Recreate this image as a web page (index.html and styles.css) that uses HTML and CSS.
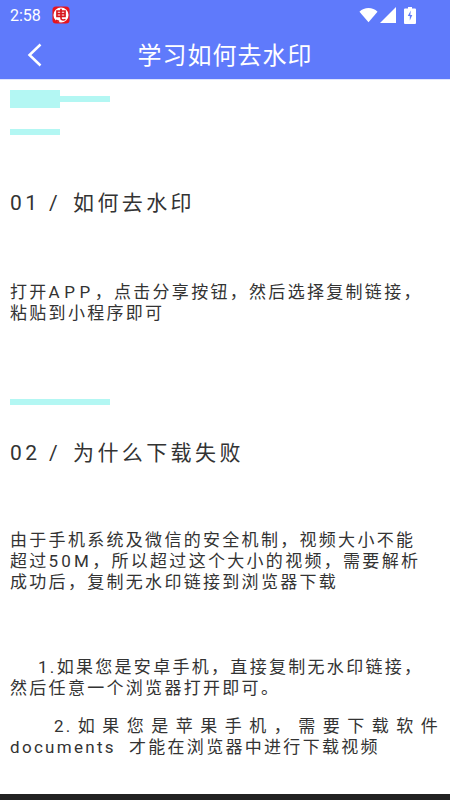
FILE: index.html
```html
<!DOCTYPE html>
<html lang="zh">
<head>
<meta charset="utf-8">
<title>学习如何去水印</title>
<link rel="stylesheet" href="styles.css">
</head>
<body>
<div class="screen">
  <header class="header">
    <div class="status">
      <span class="time">2:58</span>
      <svg class="app-icon" viewBox="0 0 20 20"><rect x="0.5" y="0.5" width="19" height="19" rx="4" fill="#e8141c"/><circle cx="10" cy="10" r="8.4" fill="#fff"/><path d="M5.500 5.500h9v6h-9zM5.500 8.500h9M10 3v10.500c0 2 2 2.500 5 1.500M4.500 15.500c1 1 2 1.500 3.500 1.500" fill="none" stroke="#d8141c" stroke-width="1.8"/></svg>
      <span class="spacer"></span>
      <svg class="wifi" viewBox="0 0 20 16"><path d="M0.500 4.500C5.500 -0.500 14.500 -0.500 19.500 4.500L10 15.500Z" fill="#fff"/></svg>
      <svg class="signal" viewBox="0 0 16 16"><path d="M16 0V16H0Z" fill="#fff"/></svg>
      <svg class="battery" viewBox="0 0 12 17"><path d="M4 0h4v1.500h3a1 1 0 0 1 1 1V16a1 1 0 0 1-1 1H1a1 1 0 0 1-1-1V2.500a1 1 0 0 1 1-1h3Z" fill="#fff"/><path d="M6.800 3.500 3.800 9h2v4.500l2.500-5.500h-2Z" fill="#5f7afb"/></svg>
    </div>
    <div class="nav">
      <svg class="back" viewBox="0 0 16 26"><path d="M13.500 2.500 2.500 13l11 10.500" fill="none" stroke="#fff" stroke-width="2.500"/></svg>
      <h1 class="title">学习如何去水印</h1>
    </div>
  </header>
  <main class="content">
    <div class="deco-top">
      <span class="deco-block"></span>
      <span class="deco-line"></span>
    </div>
    <div class="deco-short"></div>
    <h2 class="heading first"><span class="num">01 /</span>如何去水印</h2>
    <p class="text p1">打开<span class="latin">APP</span>，点击分享按钮，然后选择复制链接，<br>粘贴到小程序即可</p>
    <div class="deco-long"></div>
    <h2 class="heading second"><span class="num">02 /</span>为什么下载失败</h2>
    <p class="text p2">由于手机系统及微信的安全机制，视频大小不能<br>超过<span class="digits">50M</span>，所以超过这个大小的视频，需要解析<br>成功后，复制无水印链接到浏览器下载</p>
    <p class="text p3">1.如果您是安卓手机，直接复制无水印链接，<br>然后任意一个浏览器打开即可。</p>
    <p class="text p4">2.如果您是苹果手机，需要下载软件documents&nbsp; 才能在浏览器中进行下载视频</p>
  </main>
  <div class="navbar"></div>
</div>
</body>
</html>
```
FILE: styles.css
```css
* { box-sizing: border-box; }
html, body { margin: 0; padding: 0; }
body { font-family: Roboto, "Noto Sans CJK SC", sans-serif; background: #fff; }
.screen { width: 450px; height: 800px; display: flex; flex-direction: column; overflow: hidden; }
.header { height: 80px; background: #5f7afb; border-bottom: 1px solid #dfe4fe; color: #fff; flex: none; }
.status { height: 30px; display: flex; align-items: center; padding: 0 34px 0 10px; }
.time { font-size: 16px; font-weight: 400; width: 42px; }
.app-icon { width: 18px; height: 18px; }
.spacer { flex: 1; }
.wifi { width: 19px; height: 16px; margin-right: 2px; }
.signal { width: 16px; height: 16px; margin-right: 8px; }
.battery { width: 12px; height: 17px; }
.nav { height: 49px; position: relative; display: flex; align-items: center; justify-content: center; }
.back { position: absolute; left: 27px; top: 12px; width: 16px; height: 26px; }
.title { margin: 0 0 3px; font-size: 24px; font-weight: 400; letter-spacing: 1px; }
.content { flex: 1; padding: 10px 0 0 10px; color: #333; }
.deco-top { display: flex; align-items: center; height: 18px; }
.deco-block { width: 50px; height: 18px; background: #b3f7f3; }
.deco-line { width: 50px; height: 6px; background: #b3f7f3; }
.deco-short { width: 50px; height: 6px; background: #b3f7f3; margin-top: 21px; }
.deco-long { width: 100px; height: 6px; background: #b3f7f3; margin-top: 75px; }
.heading { margin: 0; font-size: 21px; font-weight: 400; letter-spacing: 3.4px; line-height: 28px; display: flex; }
.num { width: 63px; letter-spacing: 3.4px; }
.first { margin-top: 54px; }
.second { margin-top: 34px; }
.text { margin: 0; font-size: 17px; line-height: 21px; letter-spacing: 2.3px; width: 430px; }
.latin { letter-spacing: 4.5px; }
.digits { letter-spacing: 3.2px; }
.p1 { margin-top: 65px; }
.p2 { margin-top: 63px; }
.p3 { margin-top: 64px; text-indent: 28px; }
.p4 { margin-top: 17px; text-indent: 44px; text-align: justify; }
.navbar { height: 6px; background: #222; flex: none; }
```
